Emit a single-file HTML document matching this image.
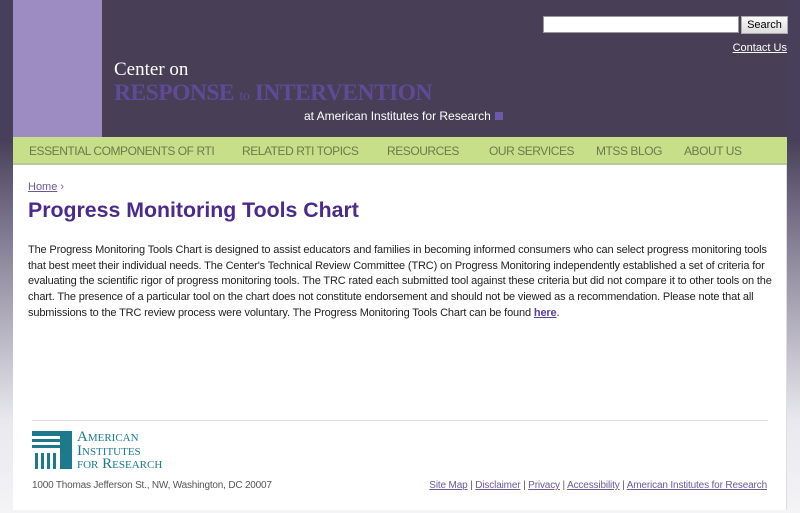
<!DOCTYPE html>
<html><head><style>
*{margin:0;padding:0;box-sizing:border-box}
body{width:800px;height:513px;overflow:hidden;font-family:"Liberation Sans",sans-serif;background:linear-gradient(#48405a 0,#48405a 140px,#8a8498 250px,#e8e8ee 420px,#f4f4f6 513px);position:relative}
.wrap{position:absolute;left:13px;top:0;width:774px;height:513px}
.hdr{position:absolute;left:0;top:0;width:774px;height:137px;background:#483f57}
.pcol{position:absolute;left:0;top:0;width:89px;height:137px;background:#9d8cc2}
.c1{position:absolute;left:101px;top:59px;font-family:"Liberation Serif",serif;color:#fff;font-size:19px}
.c2{position:absolute;left:101px;top:80px;font-family:"Liberation Serif",serif;color:#5e4a96;font-size:23.5px;font-weight:bold;letter-spacing:-0.5px}
.c2 small{font-size:14px;font-weight:normal}
.c3{position:absolute;left:291px;top:109px;color:#fff;font-size:12px}
.c3 i{display:inline-block;width:8px;height:8px;background:#6c5aa8;margin-left:4px}
.srch{position:absolute;left:530px;top:16px;width:196px;height:17px;background:#fff;border:1px solid #999}
.btn{position:absolute;left:728px;top:16px;width:47px;height:18px;background:linear-gradient(#fafafa,#ddd);border:1px solid #aaa;font-size:11px;text-align:center;line-height:16px;color:#000}
.contact{position:absolute;right:0;top:42px;font-size:11px;color:#fff;text-decoration:underline}
.nav{position:absolute;left:0;top:137px;width:774px;height:28px;background:#c8df8a;border-bottom:2px solid #b8c89a}
.nav span{position:absolute;top:7px;font-size:12px;color:#6b7a4c;letter-spacing:-0.45px}
.main{position:absolute;left:0;top:165px;width:774px;height:345px;background:#fff;border-right:1px solid #ddd}
.bc{position:absolute;left:15px;top:16px;font-size:11px;color:#7a6a9c}
.bc u{color:#6b5a96}
h1{position:absolute;left:15px;top:33px;font-size:21.3px;color:#4b2a8c;font-weight:bold}
p{position:absolute;left:15px;top:78px;width:760px;font-size:11px;letter-spacing:-0.15px;line-height:15.7px;color:#222;white-space:nowrap}
p u{color:#5a3f9a;font-weight:bold}
.hr{position:absolute;left:19px;top:255px;width:736px;height:1px;background:#ddd}
.addr{position:absolute;left:19px;top:315px;font-size:10px;letter-spacing:-0.2px;color:#555}
.flinks{position:absolute;right:19px;top:315px;font-size:10px;letter-spacing:-0.15px;color:#555}
.flinks u{color:#6b5a96}
.logo{position:absolute;left:19px;top:266px}
.lt{position:absolute;left:45px;top:0;font-family:"Liberation Serif",serif;color:#1d7a8c;font-size:15px;line-height:13.5px;width:130px;font-variant:small-caps;white-space:nowrap}
</style></head><body>
<div class="wrap">
<div class="hdr">
<div class="pcol"></div>
<div class="c1">Center on</div>
<div class="c2">RESPONSE <small>to</small> INTERVENTION</div>
<div class="c3">at American Institutes for Research<i></i></div>
<div class="srch"></div><div class="btn">Search</div>
<div class="contact">Contact Us</div>
</div>
<div class="nav">
<span style="left:16px">ESSENTIAL COMPONENTS OF RTI</span>
<span style="left:229px">RELATED RTI TOPICS</span>
<span style="left:374px">RESOURCES</span>
<span style="left:476px">OUR SERVICES</span>
<span style="left:583px">MTSS BLOG</span>
<span style="left:671px">ABOUT US</span>
</div>
<div class="main">
<div class="bc"><u>Home</u> ›</div>
<h1>Progress Monitoring Tools Chart</h1>
<p>The Progress Monitoring Tools Chart is designed to assist educators and families in becoming informed consumers who can select progress monitoring tools<br>that best meet their individual needs. The Center's Technical Review Committee (TRC) on Progress Monitoring independently established a set of criteria for<br>evaluating the scientific rigor of progress monitoring tools. The TRC rated each submitted tool against these criteria but did not compare it to other tools on the<br>chart. The presence of a particular tool on the chart does not constitute endorsement and should not be viewed as a recommendation. Please note that all<br>submissions to the TRC review process were voluntary. The Progress Monitoring Tools Chart can be found <u>here</u>.</p>
<div class="hr"></div>
<div class="logo">
<svg width="42" height="40" viewBox="0 0 42 40"><rect x="0" y="0" width="40" height="5" fill="#1d7a8c"/><rect x="28" y="0" width="12" height="38" fill="#1d7a8c"/><rect x="0" y="8" width="28" height="3" fill="#1d7a8c"/><rect x="0" y="14" width="28" height="3" fill="#1d7a8c"/><rect x="3" y="22" width="3" height="16" fill="#1d7a8c"/><rect x="9" y="22" width="3" height="16" fill="#1d7a8c"/><rect x="15" y="22" width="3" height="16" fill="#1d7a8c"/><rect x="21" y="22" width="3" height="16" fill="#1d7a8c"/></svg>
<div class="lt">American<br>Institutes<br>for Research</div>
</div>
<div class="addr">1000 Thomas Jefferson St., NW, Washington, DC 20007</div>
<div class="flinks"><u>Site Map</u> | <u>Disclaimer</u> | <u>Privacy</u> | <u>Accessibility</u> | <u>American Institutes for Research</u></div>
</div>
</div>
</body></html>
